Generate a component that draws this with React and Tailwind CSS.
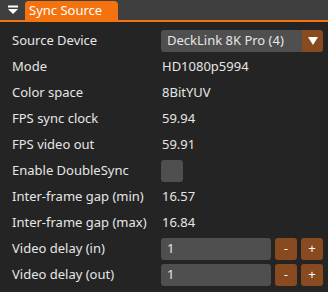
import React from "react";

const font = { fontFamily: '"Noto Sans", "Open Sans", sans-serif' };

function Label({ children }) {
  return <div className="h-[22px] flex items-center pb-[2px] text-[13px] text-[#e6e6e6] leading-none">{children}</div>;
}

function Value({ children }) {
  return <div className="h-[22px] flex items-center pb-[2px] text-[13px] text-[#e6e6e6] leading-none pl-px">{children}</div>;
}

function NumberInput({ value }) {
  return (
    <div className="h-[22px] flex gap-1">
      <div className="flex-1 bg-[#4f4f4f] rounded-[3px] flex items-center pl-[6px] text-[13px] text-[#e6e6e6]">{value}</div>
      <div className="w-[22px] bg-[#8a4a1f] rounded-[3px] flex items-center justify-center text-[12px] text-white">-</div>
      <div className="w-[22px] bg-[#8a4a1f] rounded-[3px] flex items-center justify-center text-[13px] text-white">+</div>
    </div>
  );
}

export default function App() {
  const rows = [
    ["Mode", "HD1080p5994"],
    ["Color space", "8BitYUV"],
    ["FPS sync clock", "59.94"],
    ["FPS video out", "59.91"],
  ];
  return (
    <div className="w-[328px] h-[292px] bg-[#242424] overflow-hidden" style={font}>
      <div className="h-[22px] bg-[#3f3f3f] border-b-2 border-[#f5730f] flex items-end">
        <div className="w-[25px] h-[20px] flex items-center justify-center">
          <svg width="12" height="12" viewBox="0 0 12 12">
            <rect x="1" y="1.5" width="10" height="2" fill="#ffffff" />
            <polygon points="1,5 11,5 6,10" fill="#ffffff" />
          </svg>
        </div>
        <div className="w-[93px] h-[19px] bg-[#f5730f] rounded-t-[4px] flex items-center pl-[4px] text-[13px] text-white leading-none">
          Sync Source
        </div>
      </div>
      <div className="grid grid-cols-[149px_1fr] gap-y-1 pl-3 pr-[5px] pt-[8px]">
        <Label>Source Device</Label>
        <div className="h-[22px] flex rounded-[3px] overflow-hidden">
          <div className="flex-1 bg-[#4f4f4f] flex items-center pl-[6px] text-[13px] text-[#e6e6e6]">DeckLink 8K Pro (4)</div>
          <div className="w-[21px] bg-[#8a4a1f] flex items-center justify-center">
            <svg width="12" height="10" viewBox="0 0 12 10">
              <polygon points="1,1 11,1 6,9" fill="#ffffff" />
            </svg>
          </div>
        </div>
        {rows.map(([l, v]) => (
          <React.Fragment key={l}>
            <Label>{l}</Label>
            <Value>{v}</Value>
          </React.Fragment>
        ))}
        <Label>Enable DoubleSync</Label>
        <div className="h-[22px]">
          <div className="w-[22px] h-[22px] bg-[#4f4f4f] rounded-[3px]" />
        </div>
        <Label>Inter-frame gap (min)</Label>
        <Value>16.57</Value>
        <Label>Inter-frame gap (max)</Label>
        <Value>16.84</Value>
        <Label>Video delay (in)</Label>
        <NumberInput value="1" />
        <Label>Video delay (out)</Label>
        <NumberInput value="1" />
      </div>
    </div>
  );
}
